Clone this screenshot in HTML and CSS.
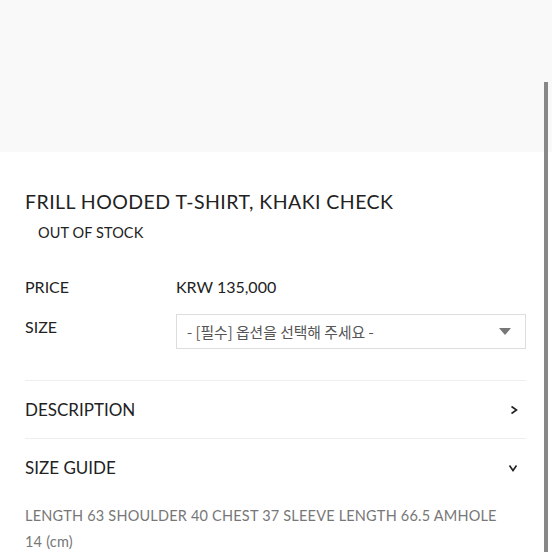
FILE: index.html
```html
<!DOCTYPE html>
<html>
<head>
<meta charset="utf-8">
<link rel="stylesheet" href="styles.css">
</head>
<body>
<div class="page">
  <div class="hero"></div>
  <div class="info">
    <h1 class="title">FRILL HOODED T-SHIRT, KHAKI CHECK</h1>
    <div class="stock">OUT OF STOCK</div>
    <div class="row price-row">
      <div class="label">PRICE</div>
      <div class="value">KRW 135,000</div>
    </div>
    <div class="row size-row">
      <div class="label">SIZE</div>
      <div class="select">
        <span class="select-text">- [필수] 옵션을 선택해 주세요 -</span>
        <svg class="caret" width="12" height="7" viewBox="0 0 12 7"><path d="M0 0H12L6 7Z" fill="#777"/></svg>
      </div>
    </div>
    <div class="acc first">
      <span class="acc-title">DESCRIPTION</span>
      <svg class="chev" width="8" height="10" viewBox="0 0 8 10"><path d="M1.5 1.5L6.5 5L1.5 8.5" fill="none" stroke="#222" stroke-width="1.6"/></svg>
    </div>
    <div class="acc">
      <span class="acc-title">SIZE GUIDE</span>
      <svg class="chev" width="10" height="8" viewBox="0 0 10 8"><path d="M1.5 1.5L5 6.5L8.5 1.5" fill="none" stroke="#222" stroke-width="1.6"/></svg>
    </div>
    <p class="guide">LENGTH 63 SHOULDER 40 CHEST 37 SLEEVE LENGTH 66.5 AMHOLE 14 (cm)</p>
  </div>
  <div class="scrollbar"></div>
</div>
</body>
</html>
```
FILE: styles.css
```css
html, body {
  margin: 0;
  padding: 0;
  background: #fff;
}
body {
  font-family: Lato, "Noto Sans CJK KR", sans-serif;
  color: #222;
  width: 552px;
  height: 552px;
  overflow: hidden;
}
.page {
  position: relative;
  width: 552px;
  height: 552px;
}
.hero {
  height: 152px;
  background: #f9f9f9;
}
.info {
  padding: 0 26px 0 25px;
}
.title {
  margin: 38px 0 0 0;
  font-size: 19.5px;
  font-weight: 400;
  line-height: 24px;
  letter-spacing: 0.45px;
}
.stock {
  margin: 10px 0 0 13px;
  font-size: 14.5px;
  line-height: 18px;
  letter-spacing: 0.1px;
}
.row {
  display: flex;
  align-items: flex-start;
}
.label {
  width: 151px;
  font-size: 16px;
  line-height: 20px;
}
.value {
  font-size: 16px;
  line-height: 20px;
}
.price-row {
  margin-top: 35px;
}
.size-row {
  margin-top: 23px;
}
.size-row .label {
  margin-top: -3px;
}
.select {
  flex: 1;
  border: 1px solid #ddd;
  display: flex;
  align-items: center;
  justify-content: space-between;
  padding: 0 14px 0 10px;
  box-sizing: border-box;
  height: 35px;
  margin-top: -6px;
}
.select-text {
  font-family: "Noto Sans CJK KR", sans-serif;
  font-size: 14.8px;
  color: #555;
  letter-spacing: 0;
}
.caret {
  display: block;
}
.acc {
  display: flex;
  align-items: center;
  justify-content: space-between;
  height: 57px;
  border-top: 1px solid #eee;
  padding-right: 8px;
}
.acc.first {
  margin-top: 31px;
}
.acc-title {
  font-size: 17px;
  line-height: 20px;
}
.chev {
  display: block;
}
.guide {
  margin: 7px 0 0 0;
  font-size: 14.5px;
  line-height: 26px;
  color: #777;
  letter-spacing: 0.2px;
  padding-right: 25px;
}
.scrollbar {
  position: absolute;
  left: 544px;
  top: 82px;
  width: 4px;
  bottom: 0;
  background: #888;
}
```
